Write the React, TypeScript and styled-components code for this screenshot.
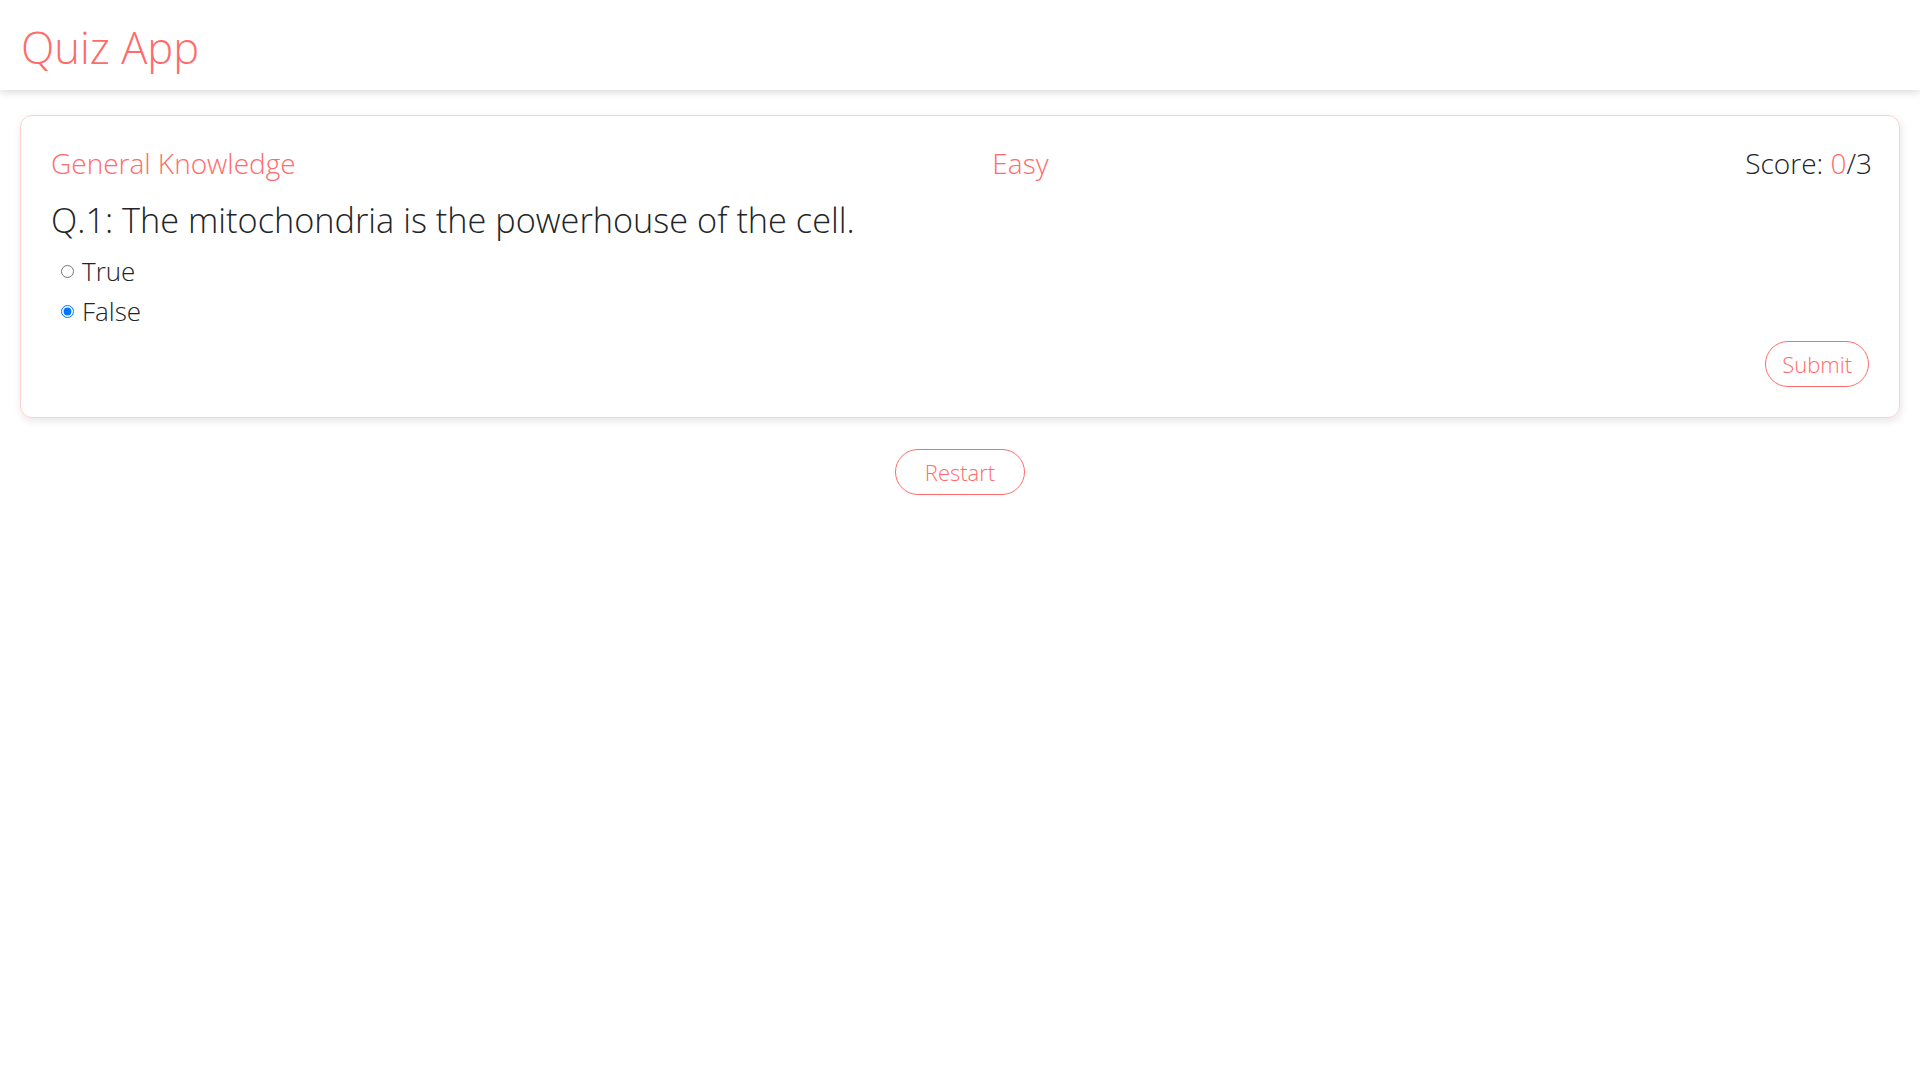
import React, { useState } from "react";
import styled, { createGlobalStyle } from "styled-components";

const ACCENT = "#ff6b6b";

const GlobalStyle = createGlobalStyle`
  body {
    margin: 0;
    background: #ffffff;
    font-family: "Open Sans", "Noto Sans", sans-serif;
    font-weight: 300;
    color: #212529;
  }
`;

const App: React.FC = () => {
  const [answer, setAnswer] = useState("False");
  const options = ["True", "False"];

  return (
    <>
      <GlobalStyle />
      <Header>
        <Title>Quiz App</Title>
      </Header>
      <Main>
        <Card>
          <MetaRow>
            <Meta accent>General Knowledge</Meta>
            <Meta accent>Easy</Meta>
            <Meta>
              Score: <Accent>0</Accent>/3
            </Meta>
          </MetaRow>
          <Question>Q.1: The mitochondria is the powerhouse of the cell.</Question>
          <Options>
            {options.map((opt) => (
              <Option key={opt}>
                <Radio
                  type="radio"
                  name="answer"
                  checked={answer === opt}
                  onChange={() => setAnswer(opt)}
                />
                {opt}
              </Option>
            ))}
          </Options>
          <Footer>
            <PillButton>Submit</PillButton>
          </Footer>
        </Card>
        <Center>
          <PillButton wide>Restart</PillButton>
        </Center>
      </Main>
    </>
  );
};

export default App;

const Header = styled.header`
  height: 90px;
  display: flex;
  align-items: center;
  padding: 0 21px;
  box-shadow: 0 2px 8px rgba(0, 0, 0, 0.16);
`;

const Title = styled.h1`
  margin: 0;
  font-size: 43.5px;
  font-weight: 300;
  color: ${ACCENT};
  line-height: 1;
  padding-top: 6px;
`;

const Main = styled.main`
  padding: 25px 20px 0;
`;

const Card = styled.section`
  border: 1px solid #ffcfcf;
  border-radius: 12px;
  padding: 30px 27px 30px 30px;
  box-shadow: 1px 3px 8px rgba(0, 0, 0, 0.1);
  display: flex;
  flex-direction: column;
`;

const MetaRow = styled.div`
  display: flex;
  justify-content: space-between;
  align-items: center;
`;

const Meta = styled.h3<{ accent?: boolean }>`
  margin: 0;
  font-size: 28px;
  font-weight: 300;
  line-height: 34px;
  color: ${(p) => (p.accent ? ACCENT : "#212529")};
`;

const Accent = styled.span`
  color: ${ACCENT};
`;

const Question = styled.h2`
  margin: 21px 0 12px;
  font-size: 34.3px;
  font-weight: 300;
  line-height: 38px;
`;

const Options = styled.div`
  display: flex;
  flex-direction: column;
`;

const Option = styled.label`
  display: flex;
  align-items: center;
  height: 40px;
  font-size: 26px;
  padding-left: 10px;
  cursor: pointer;
`;

const Radio = styled.input`
  width: 13px;
  height: 13px;
  margin: 0 8px 0 0;
`;

const Footer = styled.div`
  display: flex;
  justify-content: flex-end;
  margin: 10px 3px 0 0;
`;

const Center = styled.div`
  display: flex;
  justify-content: center;
  margin-top: 31px;
`;

const PillButton = styled.button<{ wide?: boolean }>`
  height: 46px;
  padding: 0 ${(p) => (p.wide ? "29px" : "16px")};
  border: 1px solid ${ACCENT};
  border-radius: 23px;
  background: #ffffff;
  color: ${ACCENT};
  font-family: "Open Sans", "Noto Sans", sans-serif;
  font-weight: 300;
  font-size: 22px;
  cursor: pointer;
`;
